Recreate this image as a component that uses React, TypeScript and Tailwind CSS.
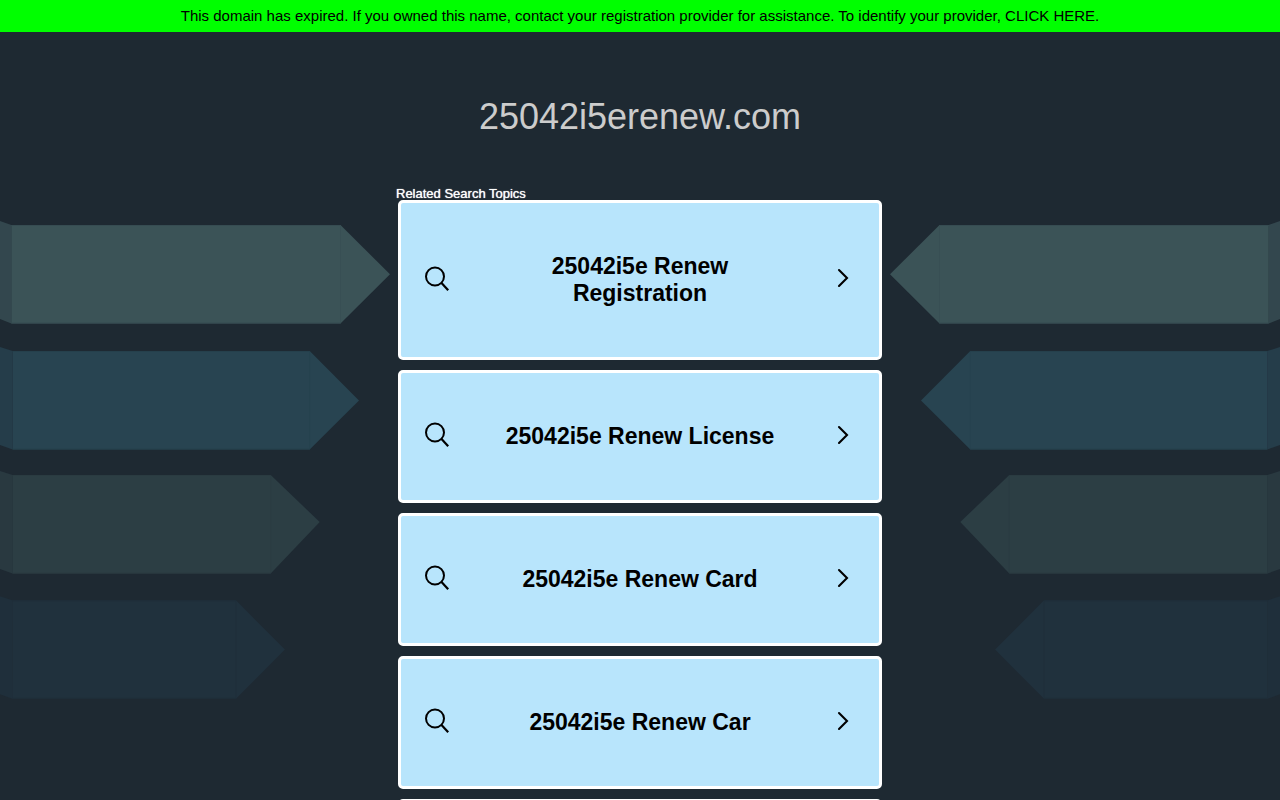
import React from "react";

interface Ribbon {
	top: number;
	fold: number;
	neck: number;
	tip: number;
	tipY: number;
	fill: string;
	edge: string;
	foldFill: string;
}

const RIBBONS: Ribbon[] = [
	{ top: 15, fold: 11.3, neck: 340.5, tip: 390, tipY: 64.3, fill: "#3b5357", edge: "#364c52", foldFill: "#33474e" },
	{ top: 141, fold: 12.7, neck: 309.7, tip: 359, tipY: 190.6, fill: "#284451", edge: "#25404c", foldFill: "#253d4a" },
	{ top: 265, fold: 12.5, neck: 270.7, tip: 319.7, tipY: 312, fill: "#2c3e44", edge: "#2a3b41", foldFill: "#293940" },
	{ top: 390.3, fold: 12.3, neck: 236, tip: 285, tipY: 439.6, fill: "#20313d", edge: "#1f2e39", foldFill: "#1f2f3b" },
];

const TOPICS = [
	"25042i5e Renew Registration",
	"25042i5e Renew License",
	"25042i5e Renew Card",
	"25042i5e Renew Car",
];

const Ribbons = ({ className }: { className: string }) => {
	return (
		<svg
			viewBox="0 0 400 500"
			className={`absolute top-[178px] w-[400px] h-[500px] ${className}`}
			aria-hidden="true"
		>
			{RIBBONS.map((r) => {
				const bottom = r.top + 98.5;
				return (
					<g key={r.top}>
						<path
							d={`M0 ${r.top - 4}L${r.fold} ${r.top}V${bottom}L0 ${bottom - 4.5}Z`}
							fill={r.foldFill}
						/>
						<path
							d={`M${r.fold} ${r.top}H${r.neck}L${r.tip} ${r.tipY}L${r.neck} ${bottom}H${r.fold}Z`}
							fill={r.fill}
						/>
						<path
							d={`M${r.fold} ${r.top + 0.5}H${r.neck}M${r.fold} ${bottom - 0.5}H${r.neck}`}
							stroke={r.edge}
							strokeWidth="1"
						/>
						<path
							d={`M${r.neck} ${r.top}V${bottom}`}
							stroke={r.edge}
							strokeWidth="0.5"
						/>
					</g>
				);
			})}
		</svg>
	);
};

const SearchIcon = () => (
	<svg
		viewBox="0 0 26 23"
		className="w-[26px] h-[23px] mb-1 shrink-0 overflow-visible"
		fill="none"
		stroke="black"
		strokeWidth="2"
		aria-hidden="true"
	>
		<circle cx="11" cy="9.5" r="9" />
		<path d="M17.3 15.8L24.2 23.2" strokeWidth="2.2" />
	</svg>
);

const ChevronIcon = () => (
	<svg
		viewBox="0 0 12 20"
		className="w-3 h-5 mb-1 shrink-0"
		fill="none"
		stroke="black"
		strokeWidth="2.1"
		strokeLinecap="round"
		aria-hidden="true"
	>
		<path d="M2 2L10 10L2 18" />
	</svg>
);

const TopicCard = ({ label }: { label: string }) => {
	return (
		<a
			href="#"
			className="flex items-center justify-between rounded-[5px] border-3 border-white bg-[#b8e5fc] min-h-[133px] py-[50px] pl-[23px] pr-[30px] text-black"
		>
			<SearchIcon />
			<span className="w-[300px] pr-[7px] text-center text-[23px] leading-[27px] font-bold">
				{label}
			</span>
			<ChevronIcon />
		</a>
	);
};

const App = () => {
	return (
		<div className="flex flex-col h-screen overflow-hidden bg-[#1e2932] font-['Liberation_Sans',Arial,sans-serif]">
			<div className="shrink-0 bg-[#00ff00] px-4 py-1 text-center text-[15px] leading-6 text-black">
				This domain has expired. If you owned this name, contact your
				registration provider for assistance. To identify your provider,{" "}
				<a href="#">CLICK HERE.</a>
			</div>
			<main className="relative flex-1">
				<Ribbons className="left-0" />
				<Ribbons className="right-0 -scale-x-100" />
				<div className="relative mx-auto w-full max-w-[488px]">
					<h1 className="pt-16 text-center text-4xl leading-[42px] text-[#cccccc]">
						25042i5erenew.com
					</h1>
					<h2 className="pt-[50px] text-[13px] leading-3 text-white [text-shadow:0_0_1px_white]">
						Related Search Topics
					</h2>
					<div className="flex flex-col gap-2.5 px-0.5">
						{TOPICS.map((topic) => (
							<TopicCard key={topic} label={topic} />
						))}
						<TopicCard label="" />
					</div>
				</div>
			</main>
		</div>
	);
};

export default App;
